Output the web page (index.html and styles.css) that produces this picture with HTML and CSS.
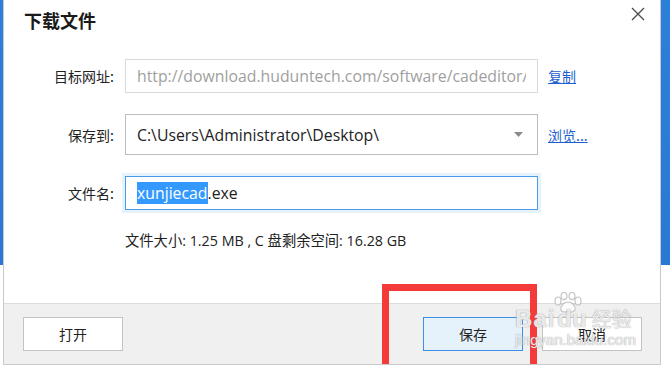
FILE: index.html
```html
<!DOCTYPE html>
<html>
<head>
<meta charset="utf-8">
<link rel="stylesheet" href="styles.css">
</head>
<body>
<div class="desktop">
  <div class="dialog">
    <div class="titlebar">
      <div class="title">下载文件</div>
      <svg class="close" width="14" height="14" viewBox="0 0 14 14"><path d="M1 1 L13 13 M13 1 L1 13" stroke="#4a4a4a" stroke-width="1.3" fill="none"/></svg>
    </div>
    <div class="form">
      <div class="row r1">
        <div class="label">目标网址:</div>
        <div class="field url"><span class="clip">http://download.huduntech.com/software/cadeditor/</span></div>
        <a class="link">复制</a>
      </div>
      <div class="row r2">
        <div class="label">保存到:</div>
        <div class="field select"><span>C:\Users\Administrator\Desktop\</span><svg class="arrow" width="9" height="5" viewBox="0 0 9 5"><path d="M0 0 H9 L4.5 5 Z" fill="#8a8a8a"/></svg></div>
        <a class="link">浏览...</a>
      </div>
      <div class="row r3">
        <div class="label">文件名:</div>
        <div class="glow"><div class="field name"><span class="sel">xunjiecad</span>.exe</div></div>
      </div>
      <div class="info">文件大小: 1.25 MB , C 盘剩余空间: 16.28 GB</div>
    </div>
    <div class="footer">
      <button class="btn">打开</button>
      <div class="spacer"></div>
      <button class="btn primary">保存</button>
      <button class="btn">取消</button>
    </div>
    <div class="redbox"></div>
    <svg class="paw" width="30" height="22" viewBox="0 0 30 22">
      <g fill="rgba(255,255,255,0.8)" stroke="rgba(150,150,150,0.55)" stroke-width="1.2">
        <ellipse cx="5" cy="9" rx="3" ry="4"/>
        <ellipse cx="11" cy="4" rx="3" ry="3.6"/>
        <ellipse cx="19" cy="4" rx="3" ry="3.6"/>
        <ellipse cx="25" cy="9" rx="3" ry="4"/>
        <path d="M15 10 C10 10 7 15 8 18 C9 21 13 20 15 19.5 C17 20 21 21 22 18 C23 15 20 10 15 10 Z"/>
      </g>
    </svg>
    <div class="wm wm1"><span class="bai">Bai</span><span class="du">du</span><span class="jy">经验</span></div>
    <div class="wm wm2">jingyan.baidu.com</div>
  </div>
</div>
</body>
</html>
```

FILE: styles.css
```css
html, body { margin: 0; padding: 0; }
body {
  width: 670px; height: 366px; overflow: hidden;
  background: linear-gradient(to bottom, #2d7fdc 0, #2a78d6 265px, #ffffff 265px);
  font-family: "Open Sans", "Noto Sans CJK SC", sans-serif;
}
.desktop { display: flex; height: 366px; }
.dialog {
  position: relative;
  margin-left: 3px;
  width: 656px; height: 364px;
  border: 1px solid #c9c9c9; border-top: none;
  background: #fff;
  display: flex; flex-direction: column;
  overflow: hidden;
}
.titlebar { height: 44px; display: flex; align-items: flex-start; justify-content: space-between; }
.title {
  font-family: "Noto Sans CJK SC", sans-serif;
  font-size: 18px; color: #1a1a1a; font-weight: 700;
  margin: 6px 0 0 20px; line-height: 28px;
}
.close { margin: 7px 15px 0 0; }
.form { flex: 1; display: flex; flex-direction: column; }
.row { display: flex; align-items: center; }
.r1 { margin-top: 15px; height: 34px; }
.r2 { margin-top: 21px; height: 41px; }
.r3 { margin-top: 21px; height: 34px; }
.label {
  width: 110px; text-align: right; padding-right: 11px;
  font-family: "Noto Sans CJK SC", sans-serif; font-size: 14px; color: #222;
}
.field {
  box-sizing: border-box; width: 413px; height: 100%;
  display: flex; align-items: center; padding-left: 11px;
  font-size: 15.8px; color: #222; white-space: nowrap; overflow: hidden;
}
.url { border: 1px solid #dadada; color: #a0a0a0; padding-right: 11px; }
.url .clip { overflow: hidden; display: block; width: 100%; text-overflow: clip; }
.select { border: 1px solid #bdbdbd; justify-content: space-between; padding-right: 14px; }
.glow { height: 40px; padding: 3px; box-sizing: border-box; margin-left: -3px; background: #e6f2fc; display: flex; }
.name { border: 1px solid #4a9ae8; background: #fff; height: 34px; }
.sel { background: #3399ff; color: #fff; }
.link {
  margin-left: 10px; font-family: "Noto Sans CJK SC", sans-serif; font-size: 14px;
  color: #1d5fcf; text-decoration: underline;
}
.info {
  margin: 19px 0 0 121px;
  font-family: "Open Sans", "Noto Sans CJK SC", sans-serif; font-size: 14.3px; color: #222;
}
.footer {
  height: 61px; box-sizing: border-box; border-top: 1px solid #dcdcdc;
  background: #f0f0f0; display: flex; align-items: flex-start;
  padding: 13px 18px 0 19px; gap: 19px;
}
.spacer { flex: 1; }
.btn {
  width: 100px; height: 34px; box-sizing: border-box;
  border: 1px solid #c3c3c3; background: #fff;
  font-family: "Noto Sans CJK SC", sans-serif; font-size: 14px; color: #222; padding: 0;
}
.primary { background: #e5f1fb; border-color: #3c8fe6; }
.redbox {
  position: absolute; left: 378px; top: 284px; width: 141px; height: 90px;
  border: 7px solid #f53a3a;
}
.wm {
  position: absolute; color: rgba(255,255,255,0.8);
  text-shadow: 0 0 1px rgba(140,140,140,0.75), 0 0 1px rgba(140,140,140,0.5);
  font-family: "Liberation Sans", "Noto Sans CJK SC", sans-serif;
  pointer-events: none; white-space: nowrap;
}
.wm1 { left: 511px; top: 307px; font-size: 24px; line-height: 24px; font-weight: bold; display: flex; align-items: baseline; }
.bai { letter-spacing: 1px; }
.du { margin-left: 2px; }
.jy { margin-left: 5px; font-size: 20px; font-weight: normal; }
.paw { position: absolute; left: 549px; top: 292px; }
.wm2 { left: 511px; top: 332px; font-size: 15px; line-height: 15px; }
```
